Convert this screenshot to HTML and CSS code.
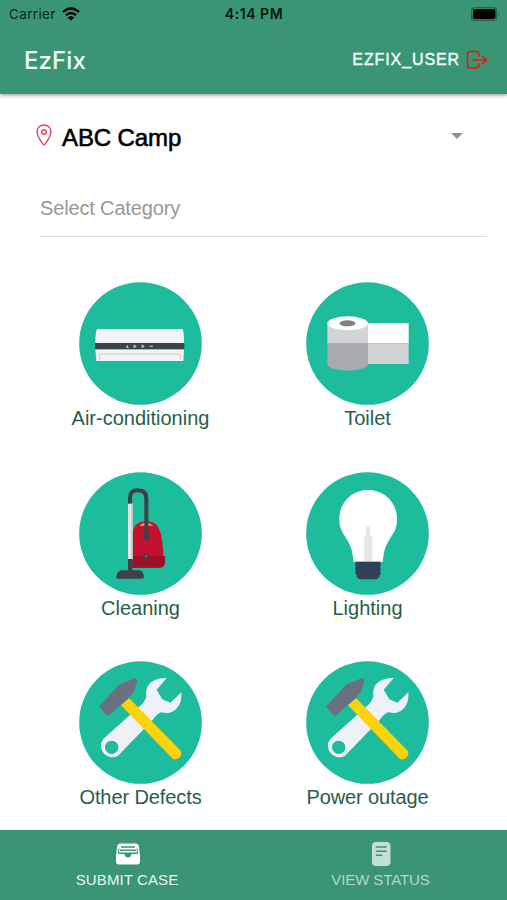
FILE: index.html
```html
<!DOCTYPE html>
<html lang="en">
<head>
<meta charset="utf-8">
<title>EzFix</title>
<link rel="stylesheet" href="styles.css">
</head>
<body>
<svg class="defs" aria-hidden="true">
  <symbol id="tools" viewBox="41 36 369 369">
    <circle cx="225.5" cy="220.500" r="184" fill="#1dbc9c"/>
    <path d="M304 87C279 86 255 96 246 113Q240 128 243 145L233 163L113 271A34 34 0 0 0 158 320L262 213Q278 190 290 190C303 194 315 192 325 186C342 176 350 156 348 130L315 161L291 151L274 122Z" fill="#eff1f8"/>
    <circle cx="139" cy="295" r="20" fill="#1dbc9c"/>
    <path d="M167 169L191 147L346 305A18 18 0 0 1 322 329Z" fill="#fcd208"/>
    <path d="M101 173L163 106L208 88Q216 87 215 98L207 125L190 148L170 164L127 202Z" fill="#69707f"/>
  </symbol>
</svg>
<div class="app">
  <header class="header">
    <div class="status">
      <div class="carrier"><span>Carrier</span>
        <svg class="wifi" viewBox="0 0 18 14"><path d="M1 5Q9-2 17 5M4 8.200Q9 4 14 8.200" fill="none" stroke="#000" stroke-width="2.300"/><path d="M5.700 10.500Q9 7.500 12.300 10.500L9 13.800Z"/></svg>
      </div>
      <div class="time">4:14 PM</div>
      <svg class="battery" viewBox="0 0 30 14"><rect x=".6" y=".6" width="25" height="12.800" rx="3.500" fill="none" stroke="#23644c" stroke-width="1.200"/><rect x="2" y="2" width="22.500" height="10" rx="2"/><path d="M27.300 5Q29.500 7 27.300 9Z" fill="#23644c"/></svg>
    </div>
    <div class="toolbar">
      <h1 class="title">EzFix</h1>
      <div class="user"><span>EZFIX_USER</span>
        <svg class="logout" viewBox="0 0 22 20" fill="none" stroke="#ee1409" stroke-width="1.500" stroke-linecap="round" stroke-linejoin="round"><path d="M12.800 6V4.200Q12.800 1.500 10.200 1.500H4Q1.500 1.500 1.500 4.200V15.500Q1.500 18 4 18H10.200Q12.800 18 12.800 15.500V13.800M7 9.900H20.200M16.500 6L20.400 9.900L16.500 13.800"/></svg>
      </div>
    </div>
  </header>
  <main class="content">
    <div class="camp">
      <svg class="pin" viewBox="0 0 16 22" fill="none" stroke="#e3455f" stroke-width="1.400"><path d="M8 1C3.800 1 1 4 1 7.500C1 11.500 5 17.500 7 20.200Q8 21.200 9 20.200C11 17.500 15 11.500 15 7.500C15 4 12.200 1 8 1Z"/><circle cx="8" cy="8" r="2.300"/></svg>
      <span class="camp-name">ABC Camp</span>
      <svg class="caret" viewBox="0 0 12 6"><path d="M0 0H12L6 6Z" fill="#929292"/></svg>
    </div>
    <div class="select">Select Category</div>
    <div class="grid">
      <div class="item">
        <svg class="icon" viewBox="41 36 369 369"><circle cx="225.500" cy="220.500" r="184" fill="#1dbc9c"/><path d="M96 177H351Q356 180 356 219H90Q90 180 96 177Z" fill="#f3f3f5"/><path d="M90 238H356L354 273H93Z" fill="#f3f3f5"/><path d="M89 219H357V238H89Z" fill="#36474a"/><path d="M103 269V252H345V269" fill="none" stroke="#c6c9cb" stroke-width="3"/><path d="M182 233L186 225L190 233Z" fill="#ddd"/><g fill="#9ba8aa"><circle cx="208" cy="229" r="5"/><circle cx="232" cy="229" r="5"/><rect x="252" y="227" width="11" height="4"/></g></svg>
        <span>Air-conditioning</span>
      </div>
      <div class="item">
        <svg class="icon" viewBox="41 36 369 369"><circle cx="225.500" cy="220.500" r="184" fill="#1dbc9c"/><path d="M215 160H349V220H215Z" fill="#fff"/><path d="M215 220H349V282H215Z" fill="#d1d3d4"/><path d="M105 160H227V220H105Z" fill="#d3d4d6"/><path d="M105 219H227V282C227 308 105 308 105 282Z" fill="#a8aaad"/><ellipse cx="166" cy="160" rx="61" ry="21" fill="#fff"/><ellipse cx="165.500" cy="160" rx="24" ry="9" fill="#808184"/></svg>
        <span>Toilet</span>
      </div>
      <div class="item">
        <svg class="icon" viewBox="41 36 369 369"><circle cx="225.500" cy="220.500" r="184" fill="#1dbc9c"/><path d="M201 323V222Q206 186 237 184H253Q277 187 286 220Q293 249 294 288H298V306Q298 323 282 323Z" fill="#c31230"/><path d="M201 288H299V306Q299 323 282 323H201Z" fill="#9d1128"/><path d="M223 198Q227 188 242 188Q257 188 264 198Z" fill="#ed7c6c"/><path d="M194 133V113Q194 91 218 91Q243 91 243 115V225" fill="none" stroke="#404147" stroke-width="12"/><path d="M235 220H251L254 232Q252 241 243 241Q233 241 232 232Z" fill="#404147"/><path d="M188 131H202V298H188Z" fill="#e5e7e8"/><path d="M198 131H202V298H198Z" fill="#bfc3c6"/><path d="M188 297H201V331H223Q235 334 236 352Q235 356 230 356H158Q153 356 153 350Q155 333 169 331H188Z" fill="#404147"/><circle cx="243" cy="289" r="8" fill="#4b3d46"/><circle cx="243" cy="289" r="3" fill="#777"/></svg>
        <span>Cleaning</span>
      </div>
      <div class="item">
        <svg class="icon" viewBox="41 36 369 369"><circle cx="225.500" cy="220.500" r="184" fill="#1dbc9c"/><path d="M183 305C182 280 178 261 161 234C148 215 141 201 141 177C141 127 179 90 227 90C276 90 314 127 314 177C314 202 306 217 294 234C277 260 273 280 272 305Z" fill="#fff"/><path d="M215 305V232Q216 227 221 226V202Q227 194 233 202V226Q239 228 240 232V305Z" fill="#e6e7e8"/><path d="M190 305H264V312Q268 315 264 319V325Q268 328 264 332V337Q268 341 263 344Q260 357 249 358H205Q194 357 192 344Q187 341 190 337V332Q186 328 190 325V319Q186 315 190 312Z" fill="#2e4157"/></svg>
        <span>Lighting</span>
      </div>
      <div class="item">
        <svg class="icon"><use href="#tools"/></svg>
        <span class="defects">Other Defects</span>
      </div>
      <div class="item">
        <svg class="icon"><use href="#tools"/></svg>
        <span class="defects">Power outage</span>
      </div>
    </div>
  </main>
  <nav class="tabs">
    <div class="tab tab-submit">
      <svg class="tab-icon" viewBox="0 0 24 24"><path d="M4.500 1.500H19.500Q22.500 1.500 23 5L24 14V19.500Q24 22.500 20.800 22.500H3.200Q0 22.500 0 19.500V14L1 5Q1.500 1.500 4.500 1.500Z" fill="#fff"/><path d="M5 5H19M4 8.300H20M2.800 11.200H9Q9.500 14.500 12 14.500Q14.500 14.500 15 11.200H21.200" fill="none" stroke="#399575" stroke-width="1.500"/><path d="M9 11H15Q15 15 12 15Q9 15 9 11M3 6.500L2.300 11.500M21 6.500L21.700 11.500" fill="#399575" stroke="#399575"/></svg>
      <span>SUBMIT CASE</span>
    </div>
    <div class="tab tab-status">
      <svg class="tab-icon" viewBox="0 0 24 24"><rect x="3" y="0" width="18.500" height="24" rx="4" fill="#c4dfd5"/><path d="M7.500 5H17M7.500 9.200H17M7.500 13.200H12.800" stroke="#399575" stroke-width="1.600" stroke-linecap="round"/></svg>
      <span>VIEW STATUS</span>
    </div>
  </nav>
</div>
</body>
</html>
```
FILE: styles.css
```css
* { box-sizing: border-box; }
body { margin: 0; background: #fff; font-family: "Liberation Sans", Arial, sans-serif; }
svg { display: block; flex-shrink: 0; }
.defs { display: none; }
.app { width: 507px; height: 900px; display: flex; flex-direction: column; overflow: hidden; }

.header { height: 94px; background: #399575; box-shadow: 0 1px 4px rgba(0, 0, 0, .45); flex-shrink: 0; }
.status { height: 27px; display: grid; grid-template-columns: 1fr auto 1fr; align-items: center; padding: 0 6px 0 9px; font-family: Inter, sans-serif; }
.carrier { display: flex; align-items: center; gap: 6px; font-size: 13.5px; color: #0b2a20; letter-spacing: .35px; }
.wifi { width: 18px; height: 14px; }
.time { font-size: 14px; font-weight: 600; color: #04150f; letter-spacing: .55px; margin-right: 2px; }
.battery { width: 30px; height: 14px; justify-self: end; }
.toolbar { height: 67px; display: flex; justify-content: space-between; align-items: center; padding: 0 19px 1px 24px; color: #f2fffa; }
.title { margin: 0; font: 500 24px Inter, sans-serif; letter-spacing: .1px; }
.user { display: flex; align-items: center; gap: 6px; font-size: 16px; letter-spacing: .9px; -webkit-text-stroke: .4px currentColor; }
.logout { width: 22px; height: 20px; -webkit-text-stroke: 0; }

.content { flex: 1; min-height: 0; }
.camp { height: 85px; display: flex; align-items: center; padding: 3px 44px 0 36px; }
.pin { width: 16px; height: 22px; margin-bottom: 7px; }
.camp-name { margin-left: 10px; font-size: 24px; color: #000; letter-spacing: -.1px; -webkit-text-stroke: .6px #000; }
.caret { width: 12px; height: 6px; margin: 0 0 5px auto; }
.select { height: 58px; margin: 0 20px 0 40px; padding-top: 18px; border-bottom: 1px solid #dcdcdc; font-size: 20px; line-height: 23px; letter-spacing: -.15px; color: #97979b; }
.grid { display: grid; grid-template-columns: 227px 227px; grid-auto-rows: 189.6px; padding: 45px 0 0 27px; }
.item { display: flex; flex-direction: column; align-items: center; font-size: 20px; line-height: 26px; color: #275e4a; }
.defects { letter-spacing: -.1px; }
.icon { width: 123px; height: 123px; }

.tabs { height: 70px; flex-shrink: 0; background: #399575; display: flex; }
.tab { width: 254px; display: flex; flex-direction: column; align-items: center; padding-top: 12px; font-size: 15px; line-height: 18px; letter-spacing: .1px; color: #e8f5f0; }
.tab-status { width: 253px; letter-spacing: -.1px; color: #b2d6c9; }
.tab-icon { width: 24px; height: 24px; margin-bottom: 5px; }
.tab-submit .tab-icon { margin-left: 2px; }
```
